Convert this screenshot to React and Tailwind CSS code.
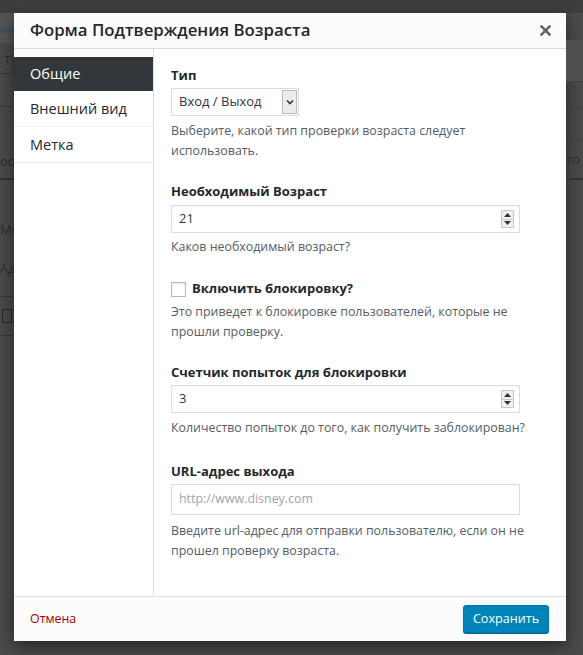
import React from "react";

const font = { fontFamily: '"Open Sans", "Noto Sans", sans-serif' };

function Spinner() {
  return (
    <div className="flex flex-col w-[13px] h-[18px] border border-[#c8c8c8] bg-[#f0f0f0]">
      <div className="flex-1 flex items-center justify-center border-b border-[#c8c8c8]">
        <svg width="7" height="4" viewBox="0 0 7 4"><path d="M0 4 L3.5 0 L7 4 Z" fill="#333" /></svg>
      </div>
      <div className="flex-1 flex items-center justify-center">
        <svg width="7" height="4" viewBox="0 0 7 4"><path d="M0 0 L3.5 4 L7 0 Z" fill="#333" /></svg>
      </div>
    </div>
  );
}

function NumberInput({ value }) {
  return (
    <div className="w-[349px] h-[28px] border border-[#ddd] bg-white flex items-center justify-between pl-[7px] pr-[5px] shadow-[inset_0_1px_2px_rgba(0,0,0,0.04)]">
      <span className="text-[13px] text-[#32373c]">{value}</span>
      <Spinner />
    </div>
  );
}

function Desc({ children, className = "" }) {
  return <p className={"text-[12.4px] leading-[20px] text-[#555d66] " + className}>{children}</p>;
}

function Label({ children, className = "" }) {
  return <div className={"text-[13px] leading-[20px] font-bold text-[#23282d] " + className}>{children}</div>;
}

function Field({ label, children, desc, className = "" }) {
  return (
    <div className={"flex flex-col " + className}>
      {label}
      {children}
      {desc}
    </div>
  );
}

function BgText({ children, className = "" }) {
  return <div className={"text-[13px] leading-none text-[#2e2e2e] whitespace-nowrap " + className}>{children}</div>;
}

export default function App() {
  return (
    <div className="w-[583px] h-[655px] bg-[#4a4a4a] overflow-hidden flex flex-col" style={font}>
      {/* darker top band of the page under the overlay */}
      <div className="h-[13px] shrink-0 bg-[#3e3e3e]" />
      <div className="flex flex-1 min-h-0">
        {/* left strip of the page seen through the overlay */}
        <div className="w-[14px] shrink-0 flex flex-col overflow-hidden">
          <div className="h-[30px] bg-[#555] flex items-center">
            <span className="text-[11px] leading-none text-[#2a4a66]">но</span>
          </div>
          <div className="h-[31px] border-b border-[#3a3a3a] flex items-end pl-[4px] pb-[6px]">
            <BgText>Ту</BgText>
          </div>
          <div className="h-[33px] border-b border-[#3a3a3a]" />
          <div className="h-[73px] border-b-2 border-[#333] flex items-end pb-[10px]">
            <BgText>оо</BgText>
          </div>
          <div className="h-[60px] flex items-end pb-[4px]">
            <BgText>Мо</BgText>
          </div>
          <div className="h-[57px] border-b border-[#3a3a3a] flex items-center">
            <BgText className="text-[12px]">Ад</BgText>
          </div>
          <div className="h-[39px] border-b border-[#3a3a3a] flex items-center pl-[2px]">
            <div className="w-[10px] h-[14px] border border-[#2a2a2a]" />
          </div>
        </div>

        {/* modal */}
        <div className="w-[552px] h-[628px] shrink-0 bg-white flex flex-col shadow-[0_5px_15px_rgba(0,0,0,0.5)]">
          <div className="h-[36px] shrink-0 bg-[#fcfcfc] border-b border-[#ddd] flex items-center justify-between pl-[16px] pr-[15px]">
            <h1 className="text-[16.8px] font-semibold text-[#23282d] leading-none">Форма Подтверждения Возраста</h1>
            <svg width="11" height="11" viewBox="0 0 11 11">
              <path d="M1.5 1.5 L9.5 9.5 M9.5 1.5 L1.5 9.5" stroke="#666" strokeWidth="2.6" strokeLinecap="square" />
            </svg>
          </div>
          <div className="flex flex-1 min-h-0">
            <div className="w-[140px] shrink-0 border-r border-[#ddd] pt-[8px] flex flex-col">
              <div className="h-[34px] bg-[#32373c] text-white text-[14.5px] flex items-center pl-[16px]">Общие</div>
              <div className="h-[36px] border-b border-[#eee] text-[#23282d] text-[14.5px] flex items-center pl-[16px]">Внешний вид</div>
              <div className="h-[36px] border-b border-[#eee] text-[#23282d] text-[14.5px] flex items-center pl-[16px]">Метка</div>
            </div>
            <div className="flex-1 pl-[17px] pt-[16px] flex flex-col">
              <Field
                label={<Label>Тип</Label>}
                desc={<Desc className="mt-[5px]">Выберите, какой тип проверки возраста следует<br />использовать.</Desc>}
              >
                <div className="mt-[3px] w-[128px] h-[28px] border border-[#ddd] bg-white flex items-center justify-between pl-[7px] pr-[1px]">
                  <span className="text-[13px] text-[#32373c]">Вход / Выход</span>
                  <div className="w-[15px] h-[24px] border border-[#bbb] bg-[#ececec] flex items-center justify-center">
                    <svg width="8" height="6" viewBox="0 0 8 6"><path d="M1 1.5 L4 4.5 L7 1.5" fill="none" stroke="#333" strokeWidth="1.6" /></svg>
                  </div>
                </div>
              </Field>

              <Field
                className="mt-[20px]"
                label={<Label>Необходимый Возраст</Label>}
                desc={<Desc className="mt-[4px]">Каков необходимый возраст?</Desc>}
              >
                <div className="mt-[4px]"><NumberInput value="21" /></div>
              </Field>

              <Field
                className="mt-[22px]"
                label={
                  <div className="flex items-center h-[20px]">
                    <div className="w-[15px] h-[15px] border border-[#b4b9be] bg-white shadow-[inset_0_1px_2px_rgba(0,0,0,0.1)]" />
                    <span className="ml-[6px] text-[13px] font-bold text-[#23282d]">Включить блокировку?</span>
                  </div>
                }
                desc={<Desc className="mt-[3px]">Это приведет к блокировке пользователей, которые не<br />прошли проверку.</Desc>}
              />

              <Field
                className="mt-[20px]"
                label={<Label>Счетчик попыток для блокировки</Label>}
                desc={<Desc className="mt-[5px]">Количество попыток до того, как получить заблокирован?</Desc>}
              >
                <div className="mt-[3px]"><NumberInput value="3" /></div>
              </Field>

              <Field
                className="mt-[23px]"
                label={<Label>URL-адрес выхода</Label>}
                desc={<Desc className="mt-[6px] leading-[19px]">Введите url-адрес для отправки пользователю, если он не<br />прошел проверку возраста.</Desc>}
              >
                <div className="mt-[3px] w-[349px] h-[31px] border border-[#ddd] bg-white flex items-center pl-[7px]">
                  <span className="text-[12.4px] text-[#a0a5aa]">http://www.disney.com</span>
                </div>
              </Field>
            </div>
          </div>
          <div className="h-[45px] shrink-0 bg-[#fcfcfc] border-t border-[#ddd] flex items-center justify-between pl-[16px] pr-[17px]">
            <span className="text-[12.4px] text-[#a00]">Отмена</span>
            <button className="h-[28px] w-[86px] rounded-[3px] bg-[#0085ba] border border-[#0073aa] text-white text-[12.6px] shadow-[0_1px_0_#006799]">Сохранить</button>
          </div>
        </div>

        {/* right strip of the page seen through the overlay */}
        <div className="flex-1 flex flex-col overflow-hidden">
          <div className="h-[27px]" />
          <div className="h-[42px] bg-[#505050] border-b border-[#3d3d3d]" />
          <div className="h-[26px] border-b border-[#3d3d3d]" />
          <div className="h-[32px] border-b border-[#3d3d3d]" />
          <div className="h-[40px] border-b-2 border-[#333] flex items-center">
            <BgText>то с</BgText>
          </div>
        </div>
      </div>
    </div>
  );
}
